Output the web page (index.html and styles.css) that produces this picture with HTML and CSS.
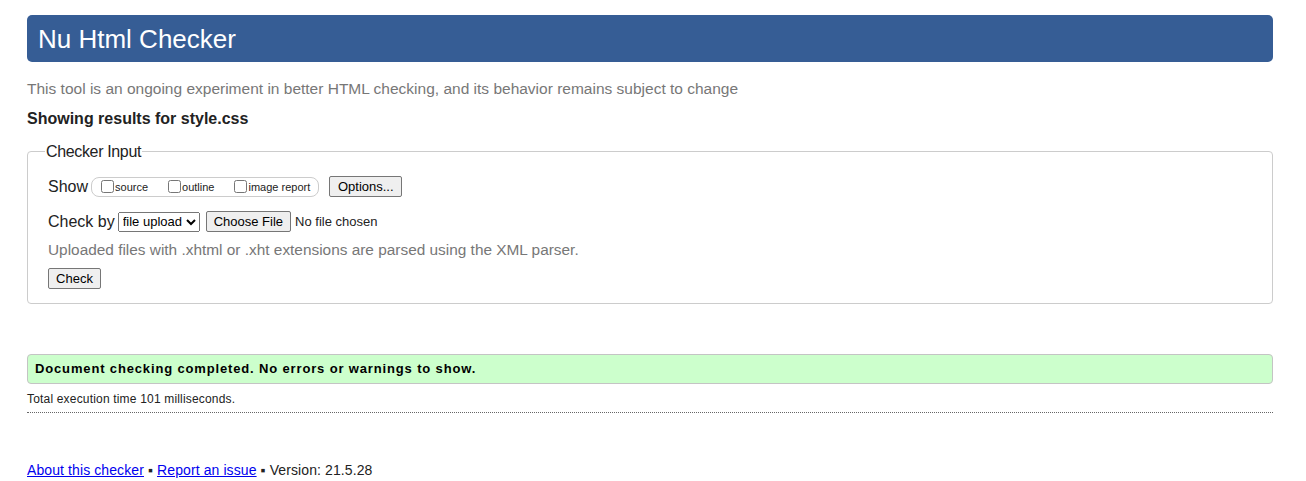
FILE: index.html
```html
<!DOCTYPE html>
<html>
<head>
<meta charset="utf-8">
<title>Nu Html Checker</title>
<link rel="stylesheet" href="styles.css">
</head>
<body>
<h1 class="title">Nu Html Checker</h1>
<p class="intro">This tool is an ongoing experiment in better HTML checking, and its behavior remains subject to change</p>
<p class="showing">Showing results for style.css</p>
<form class="checker">
  <fieldset class="inputset">
    <legend class="legend">Checker Input</legend>
    <div class="row row-show">
      <span class="label">Show</span>
      <span class="showbox">
        <label class="opt"><input type="checkbox" class="cb">source</label>
        <label class="opt"><input type="checkbox" class="cb">outline</label>
        <label class="opt"><input type="checkbox" class="cb">image report</label>
      </span>
      <button type="button" class="btn btn-options">Options...</button>
    </div>
    <div class="row row-by">
      <span class="label">Check by</span>
      <select class="sel"><option>file upload</option></select>
      <button type="button" class="btn btn-file">Choose File</button>
      <span class="nofile">No file chosen</span>
    </div>
    <p class="note">Uploaded files with .xhtml or .xht extensions are parsed using the XML parser.</p>
    <div class="row row-check">
      <button type="button" class="btn btn-check">Check</button>
    </div>
  </fieldset>
</form>
<div class="success">Document checking completed. No errors or warnings to show.</div>
<p class="stats">Total execution time 101 milliseconds.</p>
<p class="footer"><a href="#">About this checker</a> &#x25AA; <a href="#">Report an issue</a> &#x25AA; Version: 21.5.28</p>
</body>
</html>
```
FILE: styles.css
```css
html, body {
  margin: 0;
  padding: 0;
  background: #fff;
}
body {
  padding: 15px 33px 0 27px;
  font-family: "Liberation Sans", Arial, sans-serif;
  color: #222;
}
.title {
  margin: 0;
  background: #365d95;
  color: #fff;
  border-radius: 5px;
  height: 47px;
  line-height: 48px;
  padding: 0 11px;
  font-size: 26px;
  font-weight: normal;
}
.intro {
  margin: 17px 0 0;
  font-size: 15.5px;
  line-height: 20px;
  color: #777;
}
.showing {
  margin: 10px 0 0;
  font-size: 16px;
  line-height: 20px;
  font-weight: bold;
  color: #222;
}
.checker {
  margin: 13px 0 0;
}
.inputset {
  margin: 0;
  border: 1px solid #ccc;
  border-radius: 4px;
  padding: 16px 20px 14px 20px;
}
.legend {
  font-size: 16px;
  letter-spacing: -0.35px;
  padding: 0 1px;
  margin-left: -3px;
  color: #222;
  position: relative;
  top: 1px;
}
.row {
  display: flex;
  align-items: center;
  font-size: 16px;
  color: #222;
}
.row-by {
  margin-top: 14px;
}
.label {
  margin-right: 3px;
}
.showbox {
  display: inline-flex;
  align-items: center;
  border: 1px solid #ccc;
  border-radius: 8px;
  padding: 0 8px 0 9px;
  height: 18px;
  margin-right: 10px;
}
.opt {
  display: inline-flex;
  align-items: center;
  font-size: 11px;
  margin-right: 20px;
}
.opt:last-child {
  margin-right: 0;
}
.cb {
  margin: 0 1px 0 0;
  width: 13px;
  height: 13px;
}
.btn {
  font-family: "Liberation Sans", Arial, sans-serif;
  font-size: 13px;
  color: #000;
  background: #efefef;
  border: 1px solid #767676;
  border-radius: 2px;
  height: 21px;
  padding: 0 7px;
}
.btn-options {
  width: 73px;
}
.btn-check {
  width: 53px;
}
.sel {
  font-family: "Liberation Sans", Arial, sans-serif;
  font-size: 13px;
  height: 20px;
  margin-right: 6px;
}
.nofile {
  font-size: 13px;
  margin-left: 4px;
}
.note {
  margin: 8px 0 0;
  font-size: 15.4px;
  color: #777;
  line-height: 20px;
}
.row-check {
  margin-top: 8px;
}
.success {
  margin-top: 50px;
  background: #ccffcc;
  border: 1px solid #c4c4c4;
  border-radius: 4px;
  height: 28px;
  line-height: 28px;
  padding: 0 7px;
  font-size: 13px;
  font-weight: bold;
  letter-spacing: 0.85px;
  color: #000;
}
.stats {
  margin: 8px 0 0;
  font-size: 12px;
  letter-spacing: 0.18px;
  line-height: 14px;
  padding-bottom: 6px;
  border-bottom: 1px dotted #666;
  color: #222;
}
.footer {
  margin: 49px 0 0;
  font-size: 14px;
  letter-spacing: 0.1px;
  color: #222;
}
.footer a {
  color: #00e;
}
```
